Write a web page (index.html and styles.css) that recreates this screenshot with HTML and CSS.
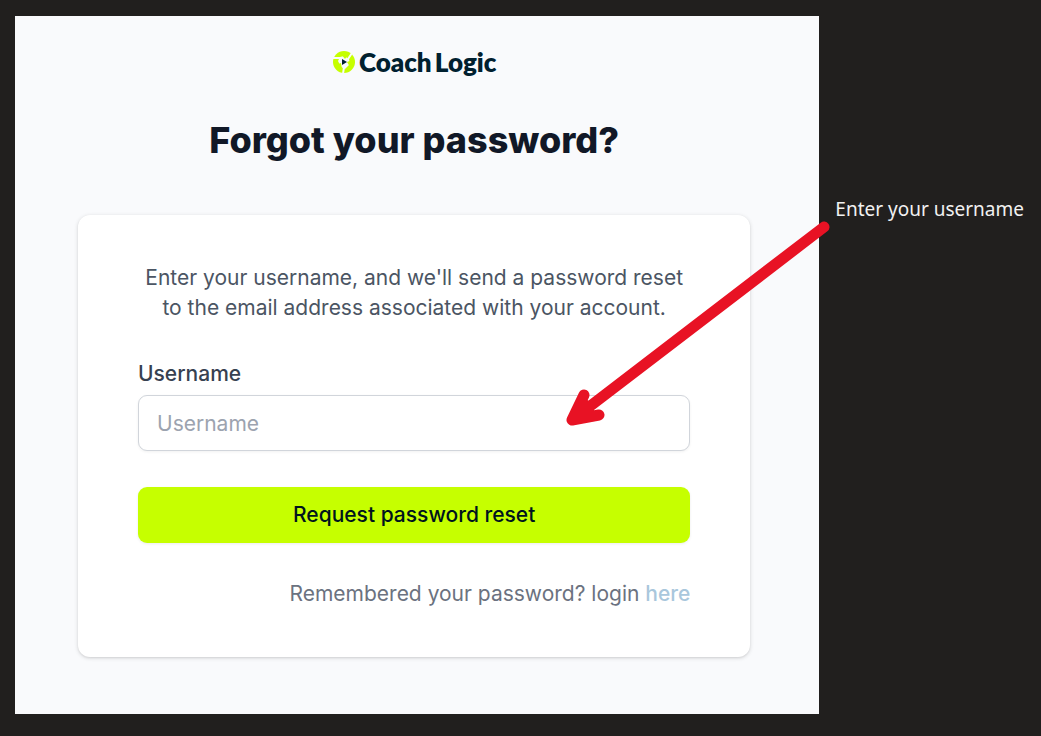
FILE: index.html
```html
<!DOCTYPE html>
<html lang="en">
<head>
  <meta charset="UTF-8" />
  <meta name="viewport" content="width=device-width, initial-scale=1" />
  <title>Forgot your password? - CoachLogic</title>
  <link rel="stylesheet" href="styles.css">
</head>
<body>
  <main class="panel">
    <div class="logo" role="img" aria-label="CoachLogic">
      <svg class="logo-mark" viewBox="0 0 24 24" aria-hidden="true">
        <circle cx="12" cy="12" r="11" fill="#c6ff00" />
        <path d="M12 6l5 3 1 5-5 5-4-2-3-6 2-4z" fill="#f9fafc" />
        <path d="M8 8 1 8M16 9l4-6M12 17l-1 7" stroke="#f9fafc" stroke-width="2" />
        <path d="M9 4l4 5 3-4zM20 10l-5 2 3 5zM4 15l5-2 1 6z" fill="#c6ff00" />
        <path d="M10 9l5 3-5 3z" fill="#00202f" />
      </svg>
      <span class="logo-text"><span>Coach</span><span>Logic</span></span>
    </div>

    <h1>Forgot your password?</h1>

    <form class="card">
      <p class="intro">Enter your username, and we'll send a password reset to the email address associated with your account.</p>
      <label for="username">Username</label>
      <input type="text" id="username" name="username" placeholder="Username" />
      <button type="submit">Request password reset</button>
      <p class="login">Remembered your password? login <a href="#">here</a></p>
    </form>

    <svg class="arrow" viewBox="0 0 264 208" aria-hidden="true">
      <path d="M258 7 6 200M18 175 6 200l27-5M18 184l4 5" />
    </svg>
  </main>

  <aside class="note">Enter your username</aside>
</body>
</html>
```

FILE: styles.css
```css
* {
  box-sizing: border-box;
}
body {
  margin: 0;
  min-height: 100vh;
  padding: 16px 17px 22px 15px;
  display: flex;
  align-items: stretch;
  gap: 16px;
  background: #211f1e;
  font-family: Inter, "Liberation Sans", sans-serif;
  font-size: 21px;
  line-height: 30px;
}
.panel {
  position: relative;
  flex: 1;
  padding: 31px 69px 57px 63px;
  background: #f9fafc;
}
.logo {
  display: flex;
  justify-content: center;
  align-items: center;
  gap: 3px;
  height: 30px;
}
.logo-mark {
  width: 24px;
  height: 24px;
}
.logo-text {
  display: flex;
  gap: 3px;
  font-family: Lato, sans-serif;
  font-weight: 800;
  font-size: 26px;
  color: #00202f;
}
h1 {
  margin: 39px 0 51px;
  font-size: 36px;
  font-weight: 800;
  line-height: 48px;
  text-align: center;
  color: #111827;
}
.card {
  padding: 48px 60px;
  background: white;
  border-radius: 12px;
  box-shadow: 0 1px 4px rgba(0, 0, 0, 0.15), 0 1px 2px rgba(0, 0, 0, 0.06);
}
.intro {
  margin: 0 0 36px;
  text-align: center;
  color: #4b5563;
}
label {
  display: block;
  margin-bottom: 6px;
  font-weight: 500;
  color: #374151;
}
input {
  display: block;
  width: 100%;
  height: 56px;
  padding: 0 18px;
  border: 1px solid #d1d5db;
  border-radius: 9px;
  box-shadow: 0 1px 3px rgba(0, 0, 0, 0.06);
  font: inherit;
  color: #111827;
}
input::placeholder {
  color: #9ca3af;
}
button {
  display: block;
  width: 100%;
  height: 56px;
  margin-top: 36px;
  border: none;
  border-radius: 9px;
  background: #c6ff00;
  box-shadow: 0 1px 3px rgba(0, 0, 0, 0.08);
  font: inherit;
  font-weight: 500;
  color: #00141e;
  cursor: pointer;
}
.login {
  margin: 36px 0 0;
  text-align: right;
  color: #6b7280;
}
.login a {
  color: #a9c7dc;
  font-weight: 500;
  text-decoration: none;
}
/* callout arrow, drawn over the card and pointing at the input */
.arrow {
  position: absolute;
  top: 204px;
  right: -11px;
  width: 264px;
  height: 208px;
  fill: none;
  stroke: #e81224;
  stroke-width: 11;
  stroke-linecap: round;
  stroke-linejoin: round;
  pointer-events: none;
}
.note {
  flex: 0 0 188px;
  padding-top: 178px;
  font-family: "Noto Sans", sans-serif;
  font-size: 19px;
  color: #f1f1f1;
  white-space: nowrap;
}
```
